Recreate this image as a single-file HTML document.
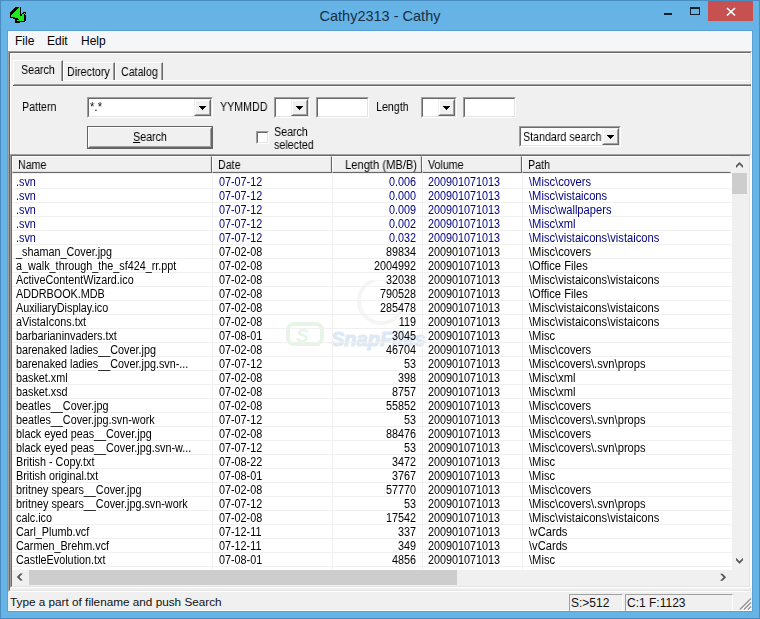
<!DOCTYPE html>
<html><head><meta charset="utf-8">
<style>
*{margin:0;padding:0;box-sizing:border-box}
html,body{width:760px;height:619px;overflow:hidden}
body{position:relative;background:#66b3e5;font-family:"Liberation Sans",sans-serif;color:#000}
.a{position:absolute}
.t11{font-size:12px;line-height:14px;white-space:nowrap;transform:scaleX(0.89);transform-origin:0 0}
.t12{font-size:12px;line-height:15px;white-space:nowrap}
.tri{width:0;height:0;border-left:3.5px solid transparent;border-right:3.5px solid transparent;border-top:4px solid #000}
.row{position:absolute;left:0;width:720px;height:14px;border-bottom:1px solid #f0f0f0;font-size:11px;line-height:13px;white-space:nowrap}
.row span{position:absolute;top:1px;font-size:12px;transform:scaleX(0.9);transform-origin:0 0}
.row span.c3{transform-origin:100% 0}
.row span.c5{transform:scaleX(0.93)}
.row,.t11{will-change:transform}
.b{color:#000080}
.c1{left:4px}
.c2{left:207px}
.c3{left:320px;width:84px;text-align:right}
.c4{left:416px}
.c5{left:517px}
.hd{top:156px;height:17px;border-style:solid;border-width:1px 1px 1px 1px;border-color:#fff #696969 #696969 #fff;background:#f0f0f0}
.hd:after{content:"";position:absolute;left:-1px;top:-1px;right:0;bottom:0;border-style:solid;border-width:0 1px 1px 0;border-color:#dedede}
.hl{border-right-color:#f0f0f0}
.hl:after{border-right-color:#f0f0f0}
.vl{top:0;width:1px;height:395px;background:#f0f0f0}
</style></head><body>
<div class="a" style="left:0;top:0;width:760px;height:619px;border:1px solid #4a8cbf"></div>
<!-- icon -->
<svg class="a" style="left:8px;top:5px" width="20" height="20" viewBox="0 0 20 20" shape-rendering="crispEdges"><rect x="7" y="2" width="4" height="1" fill="#000"/><rect x="11" y="2" width="1" height="1" fill="#22e822"/><rect x="12" y="2" width="1" height="1" fill="#000"/><rect x="6" y="3" width="4" height="1" fill="#000"/><rect x="10" y="3" width="2" height="1" fill="#22e822"/><rect x="12" y="3" width="1" height="1" fill="#000"/><rect x="5" y="4" width="4" height="1" fill="#000"/><rect x="9" y="4" width="3" height="1" fill="#22e822"/><rect x="12" y="4" width="1" height="1" fill="#000"/><rect x="4" y="5" width="4" height="1" fill="#000"/><rect x="8" y="5" width="4" height="1" fill="#22e822"/><rect x="12" y="5" width="1" height="1" fill="#000"/><rect x="3" y="6" width="4" height="1" fill="#000"/><rect x="7" y="6" width="5" height="1" fill="#22e822"/><rect x="12" y="6" width="1" height="1" fill="#000"/><rect x="2" y="7" width="4" height="1" fill="#000"/><rect x="6" y="7" width="6" height="1" fill="#22e822"/><rect x="12" y="7" width="1" height="1" fill="#000"/><rect x="15" y="7" width="3" height="1" fill="#000"/><rect x="2" y="8" width="3" height="1" fill="#000"/><rect x="5" y="8" width="7" height="1" fill="#22e822"/><rect x="12" y="8" width="1" height="1" fill="#000"/><rect x="14" y="8" width="2" height="1" fill="#000"/><rect x="16" y="8" width="1" height="1" fill="#22e822"/><rect x="17" y="8" width="1" height="1" fill="#000"/><rect x="2" y="9" width="2" height="1" fill="#000"/><rect x="4" y="9" width="8" height="1" fill="#22e822"/><rect x="12" y="9" width="2" height="1" fill="#000"/><rect x="14" y="9" width="2" height="1" fill="#22e822"/><rect x="16" y="9" width="1" height="1" fill="#000"/><rect x="2" y="10" width="1" height="1" fill="#000"/><rect x="3" y="10" width="9" height="1" fill="#22e822"/><rect x="12" y="10" width="2" height="1" fill="#000"/><rect x="14" y="10" width="2" height="1" fill="#22e822"/><rect x="16" y="10" width="2" height="1" fill="#000"/><rect x="2" y="11" width="1" height="1" fill="#000"/><rect x="3" y="11" width="13" height="1" fill="#22e822"/><rect x="16" y="11" width="2" height="1" fill="#000"/><rect x="2" y="12" width="5" height="1" fill="#000"/><rect x="7" y="12" width="9" height="1" fill="#22e822"/><rect x="16" y="12" width="2" height="1" fill="#000"/><rect x="5" y="13" width="5" height="1" fill="#000"/><rect x="10" y="13" width="6" height="1" fill="#22e822"/><rect x="16" y="13" width="2" height="1" fill="#000"/><rect x="7" y="14" width="4" height="1" fill="#000"/><rect x="11" y="14" width="5" height="1" fill="#22e822"/><rect x="16" y="14" width="2" height="1" fill="#000"/><rect x="7" y="15" width="2" height="1" fill="#000"/><rect x="9" y="15" width="7" height="1" fill="#22e822"/><rect x="16" y="15" width="2" height="1" fill="#000"/><rect x="7" y="16" width="10" height="1" fill="#000"/><rect x="7" y="17" width="5" height="1" fill="#000"/></svg>
<div class="a" style="left:0;top:6px;width:760px;text-align:center;font-size:14.5px;line-height:20px;color:#1a2e42">Cathy2313 - Cathy</div>
<div class="a" style="left:664px;top:13px;width:8px;height:2px;background:#15202b"></div>
<div class="a" style="left:690px;top:7px;width:10px;height:8px;border:1px solid #15202b;border-top-width:2px"></div>
<div class="a" style="left:708px;top:1px;width:45px;height:20px;background:#c75050"></div>
<svg class="a" style="left:726px;top:7px" width="10" height="10" viewBox="0 0 10 10"><path d="M1 1 L9 8.5 M9 1 L1 8.5" stroke="#fff" stroke-width="1.7"/></svg>

<!-- client -->
<div class="a" style="left:7px;top:30px;width:746px;height:582px;border:1px solid #58a2d8"></div>
<div class="a" style="left:8px;top:31px;width:744px;height:580px;background:#f0f0f0"></div>
<div class="a" style="left:8px;top:31px;width:744px;height:20px;background:#f5f6f7"></div>
<div class="a t12" style="left:15px;top:34px;color:#000">File</div>
<div class="a t12" style="left:47px;top:34px;color:#000">Edit</div>
<div class="a t12" style="left:81px;top:34px;color:#000">Help</div>

<!-- outer panel -->
<div class="a" style="left:8px;top:51px;width:744px;height:541px;border-style:solid;border-width:1px;border-color:#a0a0a0 #fff #fff #a0a0a0">
 <div style="position:absolute;left:0;top:0;right:0;bottom:0;border-style:solid;border-width:1px;border-color:#696969 #e3e3e3 #e3e3e3 #696969">
  <div style="position:absolute;left:0;top:0;right:0;bottom:0;border-style:solid;border-width:1px 0 0 1px;border-color:#fff"></div>
 </div>
</div>

<!-- tab page area -->
<div class="a" style="left:63px;top:80px;width:687px;height:1px;background:#fff"></div>
<div class="a" style="left:13px;top:84px;width:738px;height:1px;background:#a0a0a0"></div>
<div class="a" style="left:13px;top:85px;width:738px;height:1px;background:#696969"></div>
<div class="a" style="left:13px;top:86px;width:737px;height:1px;background:#fafafa"></div>
<!-- tabs -->
<div class="a" style="left:13px;top:60px;width:50px;height:21px;border-top:1px solid #fff;border-right:1px solid #696969"><div style="position:absolute;right:0;top:0;width:1px;height:20px;background:#a0a0a0"></div></div><div class="a" style="left:13px;top:60px;width:1px;height:25px;background:#fff"></div>
<div class="a t11" style="left:21px;top:63px">Search</div>
<div class="a" style="left:63px;top:62px;width:52px;height:18px;border-left:1px solid #fff;border-top:1px solid #fff;border-right:1px solid #696969"><div style="position:absolute;right:0;top:0;width:1px;height:17px;background:#a0a0a0"></div></div>
<div class="a t11" style="left:67px;top:65px;">Directory</div>
<div class="a" style="left:115px;top:62px;width:48px;height:18px;border-left:1px solid #fff;border-top:1px solid #fff;border-right:1px solid #696969"><div style="position:absolute;right:0;top:0;width:1px;height:17px;background:#a0a0a0"></div></div>
<div class="a t11" style="left:121px;top:65px">Catalog</div>

<!-- search panel -->
<div class="a t11" style="left:22px;top:100px">Pattern</div>
<div class="a" style="left:87px;top:97px;width:126px;height:21px;border-style:solid;border-width:1px;border-color:#a0a0a0 #fff #fff #a0a0a0;background:#fff;"><div style="position:absolute;left:0;top:0;right:0;bottom:0;border-style:solid;border-width:1px;border-color:#696969 #e3e3e3 #e3e3e3 #696969"></div></div>
<div class="a t11" style="left:90px;top:100px;letter-spacing:0.4px">*.*</div>
<div class="a" style="left:194px;top:99px;width:17px;height:17px;background:#f0f0f0;border-style:solid;border-width:1px;border-color:#f0f0f0 #696969 #696969 #f0f0f0"><div style="position:absolute;left:0;top:0;right:0;bottom:0;border-style:solid;border-width:1px;border-color:#fff #a0a0a0 #a0a0a0 #fff"></div><svg class="a" style="left:4px;top:6px" width="7" height="4" shape-rendering="crispEdges"><path d="M0 0H7V1H6V2H5V3H4V4H3V3H2V2H1V1H0Z" fill="#000"/></svg></div>
<div class="a t11" style="left:220px;top:100px">YYMMDD</div>
<div class="a" style="left:274px;top:97px;width:36px;height:21px;border-style:solid;border-width:1px;border-color:#a0a0a0 #fff #fff #a0a0a0;background:#fff;"><div style="position:absolute;left:0;top:0;right:0;bottom:0;border-style:solid;border-width:1px;border-color:#696969 #e3e3e3 #e3e3e3 #696969"></div></div>
<div class="a" style="left:291px;top:99px;width:17px;height:17px;background:#f0f0f0;border-style:solid;border-width:1px;border-color:#f0f0f0 #696969 #696969 #f0f0f0"><div style="position:absolute;left:0;top:0;right:0;bottom:0;border-style:solid;border-width:1px;border-color:#fff #a0a0a0 #a0a0a0 #fff"></div><svg class="a" style="left:4px;top:6px" width="7" height="4" shape-rendering="crispEdges"><path d="M0 0H7V1H6V2H5V3H4V4H3V3H2V2H1V1H0Z" fill="#000"/></svg></div>
<div class="a" style="left:316px;top:97px;width:53px;height:21px;border-style:solid;border-width:1px;border-color:#a0a0a0 #fff #fff #a0a0a0;background:#fff;"><div style="position:absolute;left:0;top:0;right:0;bottom:0;border-style:solid;border-width:1px;border-color:#696969 #e3e3e3 #e3e3e3 #696969"></div></div>
<div class="a t11" style="left:376px;top:100px">Length</div>
<div class="a" style="left:421px;top:97px;width:36px;height:21px;border-style:solid;border-width:1px;border-color:#a0a0a0 #fff #fff #a0a0a0;background:#fff;"><div style="position:absolute;left:0;top:0;right:0;bottom:0;border-style:solid;border-width:1px;border-color:#696969 #e3e3e3 #e3e3e3 #696969"></div></div>
<div class="a" style="left:438px;top:99px;width:17px;height:17px;background:#f0f0f0;border-style:solid;border-width:1px;border-color:#f0f0f0 #696969 #696969 #f0f0f0"><div style="position:absolute;left:0;top:0;right:0;bottom:0;border-style:solid;border-width:1px;border-color:#fff #a0a0a0 #a0a0a0 #fff"></div><svg class="a" style="left:4px;top:6px" width="7" height="4" shape-rendering="crispEdges"><path d="M0 0H7V1H6V2H5V3H4V4H3V3H2V2H1V1H0Z" fill="#000"/></svg></div>
<div class="a" style="left:463px;top:97px;width:53px;height:21px;border-style:solid;border-width:1px;border-color:#a0a0a0 #fff #fff #a0a0a0;background:#fff;"><div style="position:absolute;left:0;top:0;right:0;bottom:0;border-style:solid;border-width:1px;border-color:#696969 #e3e3e3 #e3e3e3 #696969"></div></div>

<div class="a" style="left:87px;top:126px;width:126px;height:23px;border:1px solid #646464;background:#f0f0f0"><div style="position:absolute;left:0;top:0;right:0;bottom:0;border-style:solid;border-width:1px;border-color:#fff #696969 #696969 #fff"><div style="position:absolute;left:0;top:0;right:0;bottom:0;border-style:solid;border-width:1px;border-color:#f0f0f0 #a0a0a0 #a0a0a0 #f0f0f0"></div></div></div>
<div class="a t11" style="left:87px;top:130px;width:126px;text-align:center;transform-origin:50% 0"><u>S</u>earch</div>

<div class="a" style="left:256px;top:131px;width:13px;height:13px;border-style:solid;border-width:1px;border-color:#a0a0a0 #fff #fff #a0a0a0;background:#fff;"><div style="position:absolute;left:0;top:0;right:0;bottom:0;border-style:solid;border-width:1px;border-color:#696969 #e3e3e3 #e3e3e3 #696969"></div></div>
<div class="a t11" style="left:274px;top:126px;line-height:13px">Search<br>selected</div>

<div class="a" style="left:519px;top:126px;width:102px;height:21px;border-style:solid;border-width:1px;border-color:#a0a0a0 #fff #fff #a0a0a0;background:#fff;"><div style="position:absolute;left:0;top:0;right:0;bottom:0;border-style:solid;border-width:1px;border-color:#696969 #e3e3e3 #e3e3e3 #696969"></div></div>
<div class="a t11" style="left:523px;top:130px;">Standard search</div>
<div class="a" style="left:602px;top:128px;width:17px;height:17px;background:#f0f0f0;border-style:solid;border-width:1px;border-color:#f0f0f0 #696969 #696969 #f0f0f0"><div style="position:absolute;left:0;top:0;right:0;bottom:0;border-style:solid;border-width:1px;border-color:#fff #a0a0a0 #a0a0a0 #fff"></div><svg class="a" style="left:4px;top:6px" width="7" height="4" shape-rendering="crispEdges"><path d="M0 0H7V1H6V2H5V3H4V4H3V3H2V2H1V1H0Z" fill="#000"/></svg></div>

<!-- listview -->
<div class="a" style="left:10px;top:154px;width:741px;height:434px;border-style:solid;border-width:1px;border-color:#a0a0a0 #fff #fff #a0a0a0;background:#fff;"><div style="position:absolute;left:0;top:0;right:0;bottom:0;border-style:solid;border-width:1px;border-color:#696969 #e3e3e3 #e3e3e3 #696969"></div></div>
<div class="a" style="left:12px;top:156px;width:720px;height:18px;background:#f0f0f0"></div>
<div class="a hd" style="left:12px;width:200px"></div>
<div class="a hd" style="left:212px;width:120px"></div>
<div class="a hd" style="left:332px;width:90px"></div>
<div class="a hd" style="left:422px;width:100px"></div>
<div class="a hd hl" style="left:522px;width:209px"></div>
<div class="a t11" style="left:18px;top:158px">Name</div>
<div class="a t11" style="left:218px;top:158px">Date</div>
<div class="a t11" style="left:332px;top:158px;width:85px;text-align:right;transform-origin:100% 0;transform:scaleX(0.93)">Length (MB/B)</div>
<div class="a t11" style="left:428px;top:158px">Volume</div>
<div class="a t11" style="left:528px;top:158px">Path</div>
<svg class="a" style="left:280px;top:280px" width="200" height="80" viewBox="0 0 200 80">
<circle cx="101" cy="21" r="22" fill="none" stroke="#f5f5f5" stroke-width="4"/>
<rect x="8" y="44" width="34" height="20" rx="6" fill="none" stroke="#e6f5e6" stroke-width="4"/>
<text x="16" y="62" font-family="Liberation Sans" font-weight="bold" font-style="italic" font-size="19" fill="#e6f5e6">S</text>
<text x="51" y="66" font-family="Liberation Sans" font-weight="bold" font-style="italic" font-size="20" fill="#dde9f5" stroke="#dde9f5" stroke-width="1">SnapFiles</text>
</svg>
<div class="a" style="left:12px;top:175px;width:720px;height:394px;overflow:hidden">
<div class="a vl" style="left:200px"></div><div class="a vl" style="left:320px"></div><div class="a vl" style="left:410px"></div><div class="a vl" style="left:510px"></div>
<div class="row b" style="top:0px"><span class="c1">.svn</span><span class="c2">07-07-12</span><span class="c3">0.006</span><span class="c4">200901071013</span><span class="c5">\Misc\covers</span></div>
<div class="row b" style="top:14px"><span class="c1">.svn</span><span class="c2">07-07-12</span><span class="c3">0.000</span><span class="c4">200901071013</span><span class="c5">\Misc\vistaicons</span></div>
<div class="row b" style="top:28px"><span class="c1">.svn</span><span class="c2">07-07-12</span><span class="c3">0.009</span><span class="c4">200901071013</span><span class="c5">\Misc\wallpapers</span></div>
<div class="row b" style="top:42px"><span class="c1">.svn</span><span class="c2">07-07-12</span><span class="c3">0.002</span><span class="c4">200901071013</span><span class="c5">\Misc\xml</span></div>
<div class="row b" style="top:56px"><span class="c1">.svn</span><span class="c2">07-07-12</span><span class="c3">0.032</span><span class="c4">200901071013</span><span class="c5">\Misc\vistaicons\vistaicons</span></div>
<div class="row" style="top:70px"><span class="c1">_shaman_Cover.jpg</span><span class="c2">07-02-08</span><span class="c3">89834</span><span class="c4">200901071013</span><span class="c5">\Misc\covers</span></div>
<div class="row" style="top:84px"><span class="c1">a_walk_through_the_sf424_rr.ppt</span><span class="c2">07-02-08</span><span class="c3">2004992</span><span class="c4">200901071013</span><span class="c5">\Office Files</span></div>
<div class="row" style="top:98px"><span class="c1">ActiveContentWizard.ico</span><span class="c2">07-02-08</span><span class="c3">32038</span><span class="c4">200901071013</span><span class="c5">\Misc\vistaicons\vistaicons</span></div>
<div class="row" style="top:112px"><span class="c1">ADDRBOOK.MDB</span><span class="c2">07-02-08</span><span class="c3">790528</span><span class="c4">200901071013</span><span class="c5">\Office Files</span></div>
<div class="row" style="top:126px"><span class="c1">AuxiliaryDisplay.ico</span><span class="c2">07-02-08</span><span class="c3">285478</span><span class="c4">200901071013</span><span class="c5">\Misc\vistaicons\vistaicons</span></div>
<div class="row" style="top:140px"><span class="c1">aVistaIcons.txt</span><span class="c2">07-02-08</span><span class="c3">119</span><span class="c4">200901071013</span><span class="c5">\Misc\vistaicons\vistaicons</span></div>
<div class="row" style="top:154px"><span class="c1">barbarianinvaders.txt</span><span class="c2">07-08-01</span><span class="c3">3045</span><span class="c4">200901071013</span><span class="c5">\Misc</span></div>
<div class="row" style="top:168px"><span class="c1">barenaked ladies__Cover.jpg</span><span class="c2">07-02-08</span><span class="c3">46704</span><span class="c4">200901071013</span><span class="c5">\Misc\covers</span></div>
<div class="row" style="top:182px"><span class="c1">barenaked ladies__Cover.jpg.svn-...</span><span class="c2">07-07-12</span><span class="c3">53</span><span class="c4">200901071013</span><span class="c5">\Misc\covers\.svn\props</span></div>
<div class="row" style="top:196px"><span class="c1">basket.xml</span><span class="c2">07-02-08</span><span class="c3">398</span><span class="c4">200901071013</span><span class="c5">\Misc\xml</span></div>
<div class="row" style="top:210px"><span class="c1">basket.xsd</span><span class="c2">07-02-08</span><span class="c3">8757</span><span class="c4">200901071013</span><span class="c5">\Misc\xml</span></div>
<div class="row" style="top:224px"><span class="c1">beatles__Cover.jpg</span><span class="c2">07-02-08</span><span class="c3">55852</span><span class="c4">200901071013</span><span class="c5">\Misc\covers</span></div>
<div class="row" style="top:238px"><span class="c1">beatles__Cover.jpg.svn-work</span><span class="c2">07-07-12</span><span class="c3">53</span><span class="c4">200901071013</span><span class="c5">\Misc\covers\.svn\props</span></div>
<div class="row" style="top:252px"><span class="c1">black eyed peas__Cover.jpg</span><span class="c2">07-02-08</span><span class="c3">88476</span><span class="c4">200901071013</span><span class="c5">\Misc\covers</span></div>
<div class="row" style="top:266px"><span class="c1">black eyed peas__Cover.jpg.svn-w...</span><span class="c2">07-07-12</span><span class="c3">53</span><span class="c4">200901071013</span><span class="c5">\Misc\covers\.svn\props</span></div>
<div class="row" style="top:280px"><span class="c1">British - Copy.txt</span><span class="c2">07-08-22</span><span class="c3">3472</span><span class="c4">200901071013</span><span class="c5">\Misc</span></div>
<div class="row" style="top:294px"><span class="c1">British original.txt</span><span class="c2">07-08-01</span><span class="c3">3767</span><span class="c4">200901071013</span><span class="c5">\Misc</span></div>
<div class="row" style="top:308px"><span class="c1">britney spears__Cover.jpg</span><span class="c2">07-02-08</span><span class="c3">57770</span><span class="c4">200901071013</span><span class="c5">\Misc\covers</span></div>
<div class="row" style="top:322px"><span class="c1">britney spears__Cover.jpg.svn-work</span><span class="c2">07-07-12</span><span class="c3">53</span><span class="c4">200901071013</span><span class="c5">\Misc\covers\.svn\props</span></div>
<div class="row" style="top:336px"><span class="c1">calc.ico</span><span class="c2">07-02-08</span><span class="c3">17542</span><span class="c4">200901071013</span><span class="c5">\Misc\vistaicons\vistaicons</span></div>
<div class="row" style="top:350px"><span class="c1">Carl_Plumb.vcf</span><span class="c2">07-12-11</span><span class="c3">337</span><span class="c4">200901071013</span><span class="c5">\vCards</span></div>
<div class="row" style="top:364px"><span class="c1">Carmen_Brehm.vcf</span><span class="c2">07-12-11</span><span class="c3">349</span><span class="c4">200901071013</span><span class="c5">\vCards</span></div>
<div class="row" style="top:378px"><span class="c1">CastleEvolution.txt</span><span class="c2">07-08-01</span><span class="c3">4856</span><span class="c4">200901071013</span><span class="c5">\Misc</span></div>
</div>
<!-- vscroll -->
<div class="a" style="left:732px;top:156px;width:17px;height:414px;background:#f0f0f0"></div>
<svg class="a" style="left:732px;top:156px" width="17" height="17" viewBox="0 0 17 17"><polygon points="4,9.5 7.5,6 11,9.5 11,12 7.5,8.5 4,12" fill="#5a5a5a"/></svg>
<div class="a" style="left:732px;top:173px;width:15px;height:21px;background:#cdcdcd"></div>
<svg class="a" style="left:732px;top:552px" width="17" height="17" viewBox="0 0 17 17"><polygon points="4,5.75 7.5,9.25 11,5.75 11,8.25 7.5,11.75 4,8.25" fill="#5a5a5a"/></svg>
<!-- hscroll -->
<div class="a" style="left:12px;top:570px;width:737px;height:16px;background:#f0f0f0"></div>
<svg class="a" style="left:12px;top:569px" width="17" height="17" viewBox="0 0 17 17"><polygon points="8.25,4.6 4.75,8.1 8.25,11.6 10.9,11.6 7.4,8.1 10.9,4.6" fill="#5a5a5a"/></svg>
<div class="a" style="left:29px;top:570px;width:428px;height:15px;background:#cdcdcd"></div>
<svg class="a" style="left:715px;top:569px" width="17" height="17" viewBox="0 0 17 17"><polygon points="5,4.85 8.5,8.35 5,11.85 7.6,11.85 11.1,8.35 7.6,4.85" fill="#5a5a5a"/></svg>

<!-- status bar -->
<div class="a" style="left:8px;top:610px;width:744px;height:1px;background:#fbfbfb"></div>
<div class="a t12" style="left:10px;top:594px;color:#111;font-size:11.75px">Type a part of filename and push Search</div>
<div class="a" style="left:569px;top:594px;width:54px;height:17px;border-left:1px solid #a0a0a0;border-top:1px solid #a0a0a0;border-right:1px solid #fff"></div>
<div class="a t12" style="left:571px;top:596px;color:#111">S:&gt;512</div>
<div class="a" style="left:625px;top:594px;width:108px;height:17px;border-left:1px solid #a0a0a0;border-top:1px solid #a0a0a0;border-right:1px solid #fff"></div>
<div class="a t12" style="left:627px;top:596px;color:#111">C:1 F:1123</div>
<svg class="a" style="left:738px;top:597px" width="14" height="14" viewBox="0 0 14 14"><path d="M13.5 2.5 L3 13 M13.5 6.5 L7 13 M13.5 10.5 L11 13" stroke="#fff" stroke-width="1.3"/><path d="M13 1.5 L2 12.5 M13 5.5 L6 12.5 M13 9.5 L10 12.5" stroke="#959595" stroke-width="1.5"/></svg>
</body></html>
